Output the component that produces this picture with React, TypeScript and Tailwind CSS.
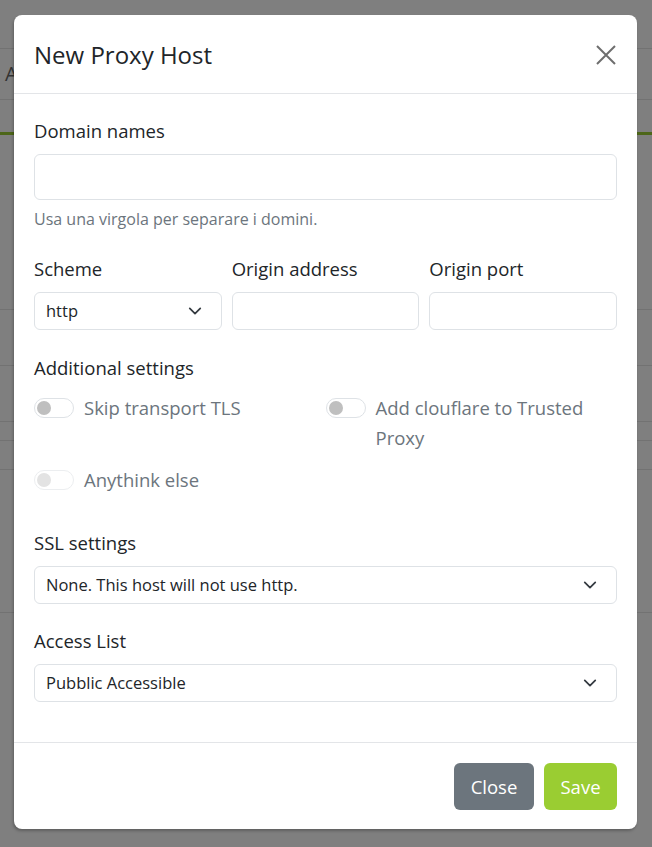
import React from 'react';

const font = { fontFamily: '"Open Sans", Lato, sans-serif' };

function Chevron() {
  return (
    <svg width="14" height="14" viewBox="0 0 16 16" fill="none" className="shrink-0">
      <path d="M2 5l6 6 6-6" stroke="#343a40" strokeWidth="2" strokeLinecap="round" strokeLinejoin="round" />
    </svg>
  );
}

function Select({ value }: { value: string }) {
  return (
    <div className="h-[38px] flex items-center justify-between pl-[11px] pr-[19px] border border-[#dee2e6] rounded-[6px] bg-white text-[16.5px] text-[#212529]">
      <span>{value}</span>
      <Chevron />
    </div>
  );
}

function Toggle({ label, disabled }: { label: React.ReactNode; disabled?: boolean }) {
  return (
    <div className="flex items-start gap-[10px]">
      <div
        className={
          'mt-[5px] w-[40px] h-[20px] shrink-0 rounded-full border flex items-center px-[2px] ' +
          (disabled ? 'border-[#eceef0]' : 'border-[#dee2e6]')
        }
      >
        <div className={'w-[14px] h-[14px] rounded-full ' + (disabled ? 'bg-[#e3e3e3]' : 'bg-[#bfbfbf]')} />
      </div>
      <div className="text-[18.5px] leading-[30px] text-[#6c757d]">{label}</div>
    </div>
  );
}

function Label({ children }: { children: React.ReactNode }) {
  return <div className="text-[18.5px] leading-[27px] text-[#212529] mb-[10px]">{children}</div>;
}

export default function App() {
  return (
    <div className="relative w-[652px] h-[847px] overflow-hidden bg-[#7f7f7f]" style={font}>
      {/* dimmed page behind */}
      <div className="flex flex-col">
        <div className="h-[49px] border-b border-[#727272]" />
        <div className="h-[51px] border-b border-[#727272] flex items-center pl-[5px] text-[20px] text-[#333]">A</div>
        <div className="h-[32px]" />
        <div className="h-[3px] bg-[#4d6619]" />
        <div className="h-[175px] border-b border-[#727272]" />
        <div className="h-[56px] border-b border-[#727272]" />
        <div className="h-[56px] border-b border-[#727272]" />
        <div className="h-[19px] border-b border-[#727272]" />
        <div className="h-[29px] border-b border-[#727272]" />
        <div className="h-[143px] border-b border-[#727272]" />
      </div>

      {/* modal */}
      <div className="absolute left-[14px] top-[15px] w-[623px] h-[814px] bg-white rounded-[8px] shadow-[-1px_2px_3px_rgba(0,0,0,0.25)] flex flex-col">
        <div className="h-[79px] border-b border-[#e3e5e8] flex items-center justify-between pl-[20px] pr-[20px]">
          <div className="text-[24px] text-[#212529] mt-[2px]">New Proxy Host</div>
          <svg width="22" height="22" viewBox="0 0 22 22" className="mt-[1px]">
            <path d="M2 2l18 18M20 2L2 20" stroke="#6e6e6e" strokeWidth="2" />
          </svg>
        </div>

        <div className="flex-1 px-[20px] pt-[23px]">
          <Label>Domain names</Label>
          <div className="h-[46px] border border-[#dee2e6] rounded-[6px]" />
          <div className="mt-[8px] text-[16px] leading-[22px] text-[#6c757d]">Usa una virgola per separare i domini.</div>

          <div className="mt-[25px] grid grid-cols-3 gap-x-[10px]">
            <div>
              <Label>Scheme</Label>
              <div className="h-[38px] flex items-center justify-between pl-[11px] pr-[19px] border border-[#dee2e6] rounded-[6px] text-[16.5px] text-[#212529]">
                <span>http</span>
                <Chevron />
              </div>
            </div>
            <div>
              <Label>Origin address</Label>
              <div className="h-[38px] border border-[#dee2e6] rounded-[6px]" />
            </div>
            <div>
              <Label>Origin port</Label>
              <div className="h-[38px] border border-[#dee2e6] rounded-[6px]" />
            </div>
          </div>

          <div className="mt-[24px] text-[18.5px] leading-[27px] text-[#212529] mb-[12px]">Additional settings</div>
          <div className="grid grid-cols-2 gap-y-[12px]">
            <Toggle label="Skip transport TLS" />
            <Toggle label={<>Add clouflare to Trusted<br />Proxy</>} />
            <Toggle label="Anythink else" disabled />
          </div>

          <div className="mt-[34px]">
            <Label>SSL settings</Label>
            <Select value="None. This host will not use http." />
          </div>
          <div className="mt-[23px]">
            <Label>Access List</Label>
            <Select value="Pubblic Accessible" />
          </div>
        </div>

        <div className="h-[87px] border-t border-[#e3e5e8] flex items-start justify-end gap-[10px] pt-[20px] pr-[20px]">
          <button className="h-[47px] w-[80px] rounded-[6px] bg-[#6c757d] text-white text-[18.5px]">Close</button>
          <button className="h-[47px] w-[73px] rounded-[6px] bg-[#9acd32] text-white text-[18.5px]">Save</button>
        </div>
      </div>
    </div>
  );
}
